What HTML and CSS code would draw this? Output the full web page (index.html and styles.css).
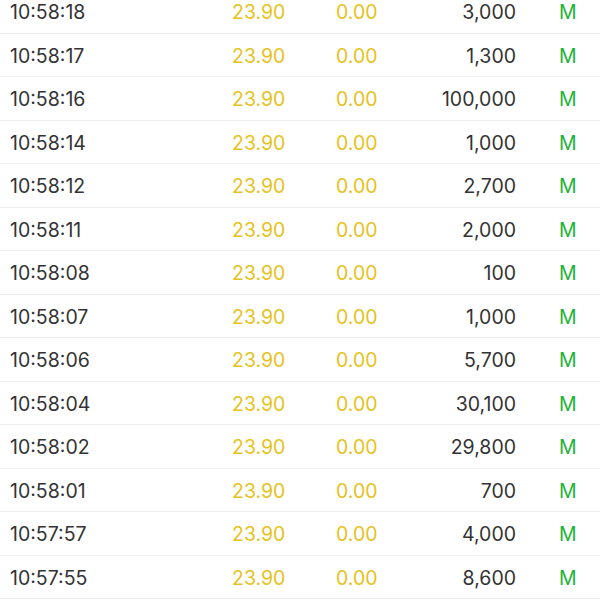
FILE: index.html
```html
<!DOCTYPE html>
<html>
<head>
<meta charset="utf-8">
<link rel="stylesheet" href="styles.css">
</head>
<body>
<div class="list">
  <div class="row"><span class="time">10:58:18</span><span class="price">23.90</span><span class="chg">0.00</span><span class="vol">3,000</span><span class="flag">M</span></div>
  <div class="row"><span class="time">10:58:17</span><span class="price">23.90</span><span class="chg">0.00</span><span class="vol">1,300</span><span class="flag">M</span></div>
  <div class="row"><span class="time">10:58:16</span><span class="price">23.90</span><span class="chg">0.00</span><span class="vol">100,000</span><span class="flag">M</span></div>
  <div class="row"><span class="time">10:58:14</span><span class="price">23.90</span><span class="chg">0.00</span><span class="vol">1,000</span><span class="flag">M</span></div>
  <div class="row"><span class="time">10:58:12</span><span class="price">23.90</span><span class="chg">0.00</span><span class="vol">2,700</span><span class="flag">M</span></div>
  <div class="row"><span class="time">10:58:11</span><span class="price">23.90</span><span class="chg">0.00</span><span class="vol">2,000</span><span class="flag">M</span></div>
  <div class="row"><span class="time">10:58:08</span><span class="price">23.90</span><span class="chg">0.00</span><span class="vol">100</span><span class="flag">M</span></div>
  <div class="row"><span class="time">10:58:07</span><span class="price">23.90</span><span class="chg">0.00</span><span class="vol">1,000</span><span class="flag">M</span></div>
  <div class="row"><span class="time">10:58:06</span><span class="price">23.90</span><span class="chg">0.00</span><span class="vol">5,700</span><span class="flag">M</span></div>
  <div class="row"><span class="time">10:58:04</span><span class="price">23.90</span><span class="chg">0.00</span><span class="vol">30,100</span><span class="flag">M</span></div>
  <div class="row"><span class="time">10:58:02</span><span class="price">23.90</span><span class="chg">0.00</span><span class="vol">29,800</span><span class="flag">M</span></div>
  <div class="row"><span class="time">10:58:01</span><span class="price">23.90</span><span class="chg">0.00</span><span class="vol">700</span><span class="flag">M</span></div>
  <div class="row"><span class="time">10:57:57</span><span class="price">23.90</span><span class="chg">0.00</span><span class="vol">4,000</span><span class="flag">M</span></div>
  <div class="row"><span class="time">10:57:55</span><span class="price">23.90</span><span class="chg">0.00</span><span class="vol">8,600</span><span class="flag">M</span></div>
</div>
</body>
</html>
```
FILE: styles.css
```css
html, body {
  margin: 0;
  padding: 0;
  background: #ffffff;
  overflow: hidden;
}
.list {
  margin-top: -10px;
  font-family: Inter, "Noto Sans", sans-serif;
  font-size: 19.5px;
}
.row {
  box-sizing: border-box;
  height: 43.5px;
  padding-top: 2px;
  border-bottom: 1px solid #efefef;
  display: grid;
  grid-template-columns: 222px 104px 100px 80px auto;
  align-items: center;
  padding-left: 10px;
}
.time { color: #333333; }
.price, .chg { color: #e6c21c; }
.vol { color: #333333; text-align: right; }
.flag { color: #1db336; padding-left: 43px; }
```
